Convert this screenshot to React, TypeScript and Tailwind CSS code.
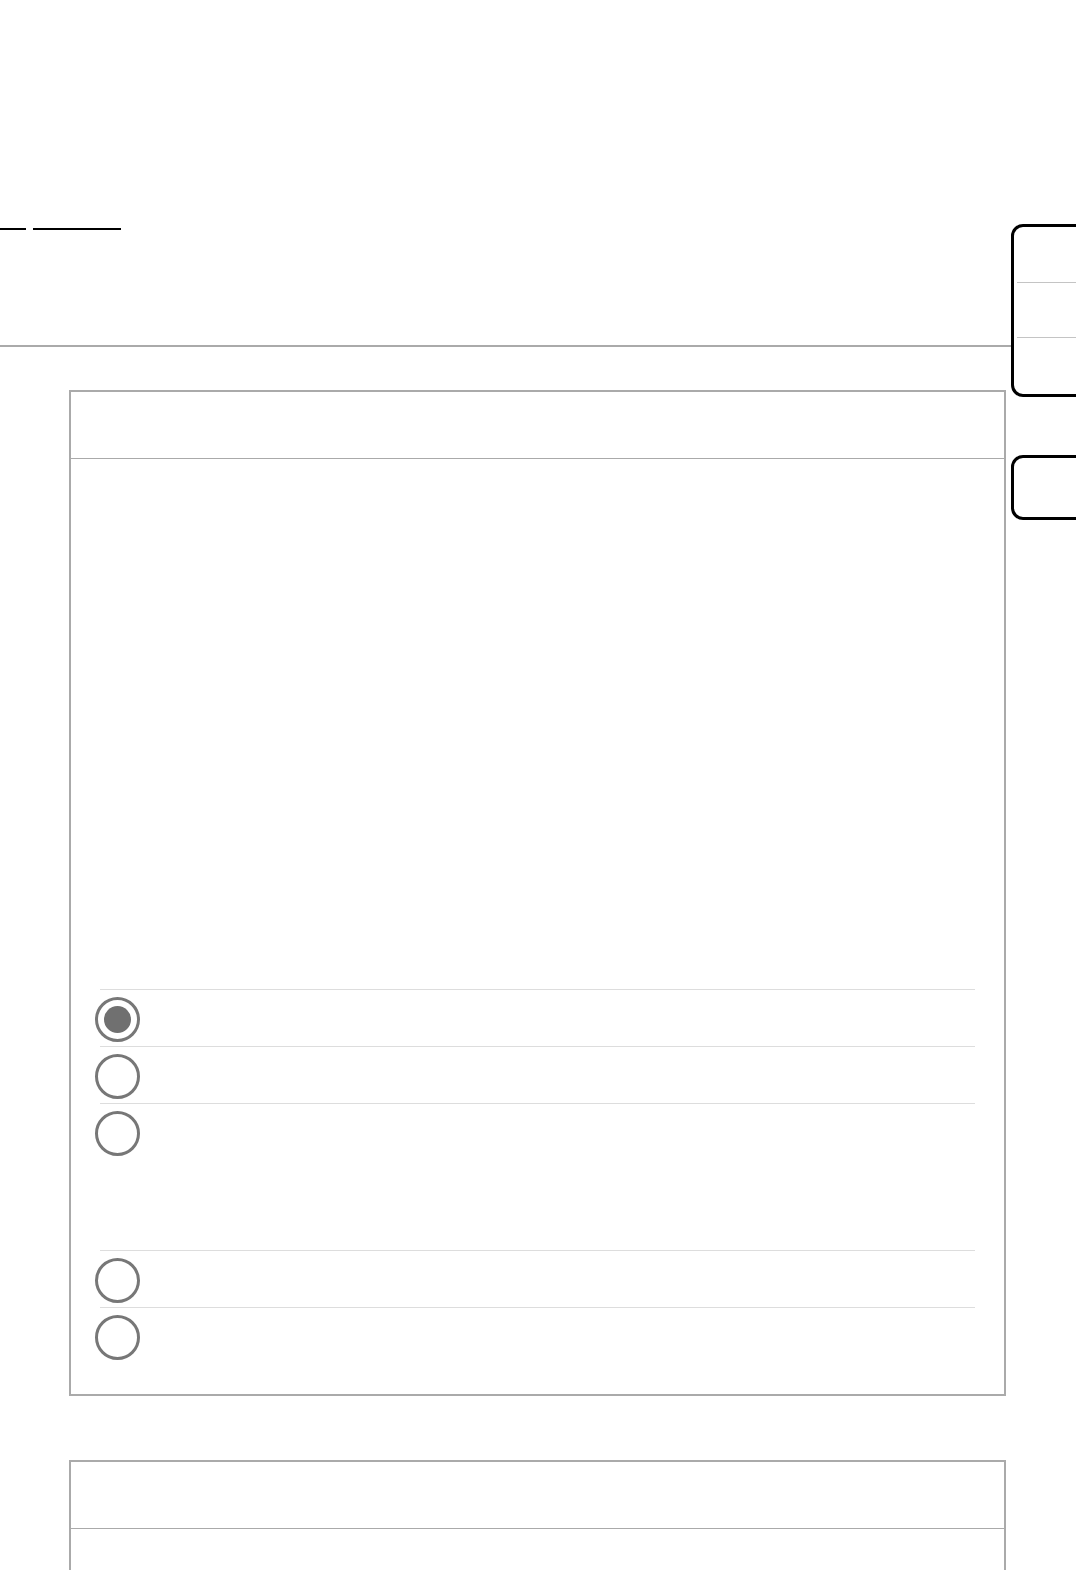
import React from "react";

const Radio = ({ checked }: { checked?: boolean }) => {
    return (
        <div className="ml-[-5px] mt-[7px] flex h-[45px] w-[45px] shrink-0 items-center justify-center rounded-full border-[3px] border-[#777777] bg-white">
            {checked && <div className="h-[27px] w-[27px] rounded-full bg-[#707070]" />}
        </div>
    );
};

const OptionRow = ({ checked, tall }: { checked?: boolean; tall?: boolean }) => {
    return (
        <div className={tall ? "flex h-[147px] items-start border-t border-[#dddddd]" : "flex h-[57px] items-start border-t border-[#dddddd]"}>
            <Radio checked={checked} />
        </div>
    );
};

const Card = ({ children }: { children?: React.ReactNode }) => {
    return (
        <div className="w-[937px] border-2 border-[#aaaaaa] bg-white">
            <div className="h-[67px] border-b border-[#aaaaaa]" />
            {children}
        </div>
    );
};

const App = () => {
    return (
        <div className="flex h-[1570px] w-[1076px] overflow-hidden bg-white font-['Liberation_Sans',Arial,sans-serif]">
            <div className="w-[1011px] shrink-0">
                <div className="h-[347px] border-b-2 border-[#aaaaaa] pt-[228px]">
                    <div className="flex gap-[7px]">
                        <div className="h-[2px] w-[26px] bg-black" />
                        <div className="h-[2px] w-[88px] bg-black" />
                    </div>
                </div>
                <div className="space-y-[64px] pl-[69px] pt-[43px]">
                    <Card>
                        <div className="px-[29px] pb-[30px] pt-[530px]">
                            <OptionRow checked />
                            <OptionRow />
                            <OptionRow tall />
                            <OptionRow />
                            <OptionRow />
                        </div>
                    </Card>
                    <Card>
                        <div className="h-[200px]" />
                    </Card>
                </div>
            </div>
            <div className="w-[110px] shrink-0 pt-[224px]">
                <div className="h-[173px] rounded-[12px] border-[3px] border-black bg-white">
                    <div className="ml-[3px] h-[56px] border-b border-[#c4c4c4]" />
                    <div className="ml-[3px] h-[55px] border-b border-[#c4c4c4]" />
                    <div className="h-[56px]" />
                </div>
                <div className="mt-[58px] h-[65px] rounded-[12px] border-[3px] border-black bg-white" />
            </div>
        </div>
    );
};

export default App;
